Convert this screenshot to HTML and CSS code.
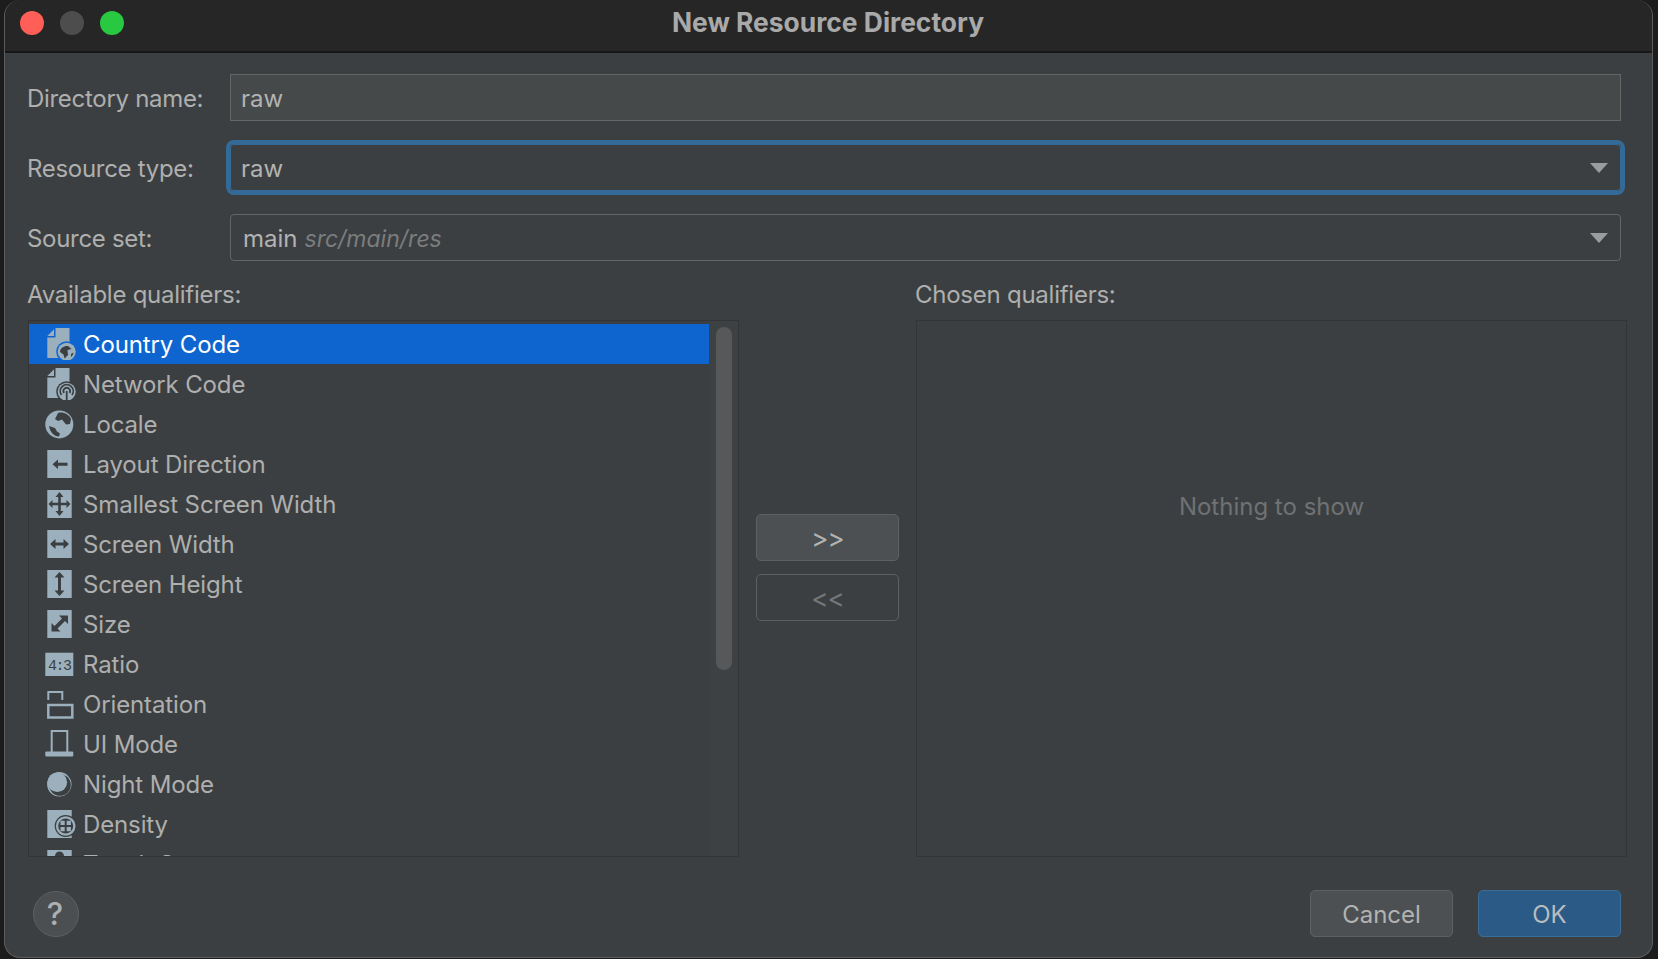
FILE: index.html
```html
<!DOCTYPE html>
<html lang="en">
<head>
<meta charset="utf-8">
<title>New Resource Directory</title>
<link rel="stylesheet" href="styles.css">
</head>
<body>
<div class="window">
  <header class="titlebar">
    <div class="lights"><span class="light red"></span><span class="light gray"></span><span class="light green"></span></div>
    <div class="title">New Resource Directory</div>
  </header>
  <main class="content">
    <div class="form">
      <label class="label">Directory name:</label>
      <div class="field input">raw</div>
      <label class="label">Resource type:</label>
      <div class="field combo focused">raw<span class="caret"></span></div>
      <label class="label">Source set:</label>
      <div class="field combo rounded source">main <em class="path">src/main/res</em><span class="caret"></span></div>
    </div>
    <div class="qualifiers">
      <div class="column">
        <div class="col-label">Available qualifiers:</div>
        <div class="panel list-panel">
          <ul class="rows">
            <li class="row selected"><svg class="icon" viewBox="0 0 32 32"><path class="l" d="M2.3 8 9 1.2V8zM10.5 0h14v30H2.3V9.5h8.2z"/><circle class="bg sel-bg" cx="21.7" cy="23.7" r="10.5"/><circle class="l" cx="21.7" cy="23.7" r="9"/><path class="d" d="M15 24c0-4 4-6.500 8-6l3.500 3-4 1 .5 5-3.500 3.500-1-4zM26 26l2.500-1.500c0 1.500-1 3.500-2.500 4.500z"/></svg>Country Code</li>
            <li class="row"><svg class="icon" viewBox="0 0 32 32"><path class="l" d="M2.3 8 9 1.2V8zM10.500 0h14v30H2.300V9.500h8.200z"/><circle class="bg" cx="21.700" cy="23.700" r="10.500"/><circle class="l" cx="21.700" cy="23.700" r="9"/><path class="ds" d="M16.500 27a6.500 6.500 0 1 1 10.500 0M19 25a3.300 3.300 0 1 1 5.500 0"/><path class="ds" d="M21.700 23v9"/></svg>Network Code</li>
            <li class="row"><svg class="icon" viewBox="0 0 32 32"><circle class="l" cx="14.300" cy="16.400" r="14"/><path class="d" d="M13 5c5-1.500 11 1.500 13 6l-1 5-4 .5-4-5-4 1.500-3-2zM4 18l6 2 2 3.500 3 2-1 3C9 28.500 5 24 4 18z"/></svg>Locale</li>
            <li class="row"><svg class="icon" viewBox="0 0 32 32"><rect class="l" x="2.300" y="2" width="24.400" height="28"/><path class="d" d="M7.500 16.300 13 11.500v3.300h9.500v3H13v3.300z"/></svg>Layout Direction</li>
            <li class="row"><svg class="icon" viewBox="0 0 32 32"><rect class="l" x="2.300" y="2" width="24.400" height="28"/><path class="d" d="M14.500 4l4 5h-2.700v5.700h5.700V12l4 4-4 4v-2.700h-5.700V23h2.700l-4 5-4-5h2.700v-5.700H7.500V20l-4-4 4-4v2.700h5.700V9h-2.700z"/></svg>Smallest Screen Width</li>
            <li class="row"><svg class="icon" viewBox="0 0 32 32"><rect class="l" x="2.300" y="2" width="24.400" height="28"/><path class="d" d="M5 16l5.500-5v3.500h8V11l5.500 5-5.500 5v-3.500h-8V21z"/></svg>Screen Width</li>
            <li class="row"><svg class="icon" viewBox="0 0 32 32"><rect class="l" x="2.300" y="2" width="24.400" height="28"/><path class="d" d="M14.500 4l5 5.500h-3.500v13h3.500l-5 5.500-5-5.500H13v-13H9.500z"/></svg>Screen Height</li>
            <li class="row"><svg class="icon" viewBox="0 0 32 32"><rect class="l" x="2.300" y="2" width="24.400" height="28"/><path class="d" d="M23 7.500V16l-3-3-7.500 7.500 3 3H6.500V15l3 3L17 10.500l-3-3z"/></svg>Size</li>
            <li class="row"><svg class="icon" viewBox="0 0 32 32"><rect class="l" x="0.300" y="4.700" width="28" height="23.300"/><text class="ratio" x="14.300" y="21.500">4:3</text></svg>Ratio</li>
            <li class="row"><svg class="icon" viewBox="0 0 32 32"><path class="ls" d="M3.300 12V4h14v8"/><rect class="ls wide" x="3.300" y="17" width="24" height="12.500"/></svg>Orientation</li>
            <li class="row"><svg class="icon" viewBox="0 0 32 32"><path class="ls" d="M6.700 24V3h15.600v21"/><rect class="l" x="0.300" y="23.500" width="28" height="5" rx="1"/></svg>UI Mode</li>
            <li class="row"><svg class="icon" viewBox="0 0 32 32"><circle class="l" cx="14.300" cy="16.300" r="12.200"/><circle class="bg" cx="15" cy="17" r="10.800"/><circle class="l" cx="12.300" cy="14.300" r="9.800"/></svg>Night Mode</li>
            <li class="row"><svg class="icon" viewBox="0 0 32 32"><rect class="l" x="2.300" y="2" width="24.400" height="28"/><circle class="bg" cx="20.700" cy="18" r="11"/><circle class="l" cx="20.700" cy="18" r="9.800"/><circle class="bg" cx="20.700" cy="18" r="7.500"/><path class="l" d="M15.500 12.800h4.200V17h-4.200zM21.700 12.800h4.200V17h-4.200zM15.500 19h4.200v4.200h-4.200zM21.700 19h4.200v4.200h-4.200z"/></svg>Density</li>
            <li class="row"><svg class="icon" viewBox="0 0 32 32"><rect class="l" x="2.300" y="2" width="24.400" height="28"/><circle class="bg" cx="14.500" cy="8" r="4.500"/></svg>Touch Screen</li>
          </ul>
          <div class="track"><div class="thumb"></div></div>
        </div>
      </div>
      <div class="mover">
        <button class="btn move on">&gt;&gt;</button>
        <button class="btn move off">&lt;&lt;</button>
      </div>
      <div class="column">
        <div class="col-label">Chosen qualifiers:</div>
        <div class="panel empty">Nothing to show</div>
      </div>
    </div>
    <footer class="footer">
      <button class="help">?</button>
      <div class="actions">
        <button class="btn on">Cancel</button>
        <button class="btn primary">OK</button>
      </div>
    </footer>
  </main>
</div>
</body>
</html>
```

FILE: styles.css
```css
* { box-sizing: border-box; }
html, body { margin: 0; height: 100%; }
body {
  background: #1c1c1c;
  font-family: Inter, "Liberation Sans", sans-serif;
  font-size: 24px;
  color: #aeafae;
  overflow: hidden;
}
.window {
  width: 1649px;
  height: 958px;
  margin-left: 4px;
  background: #3c3f41;
  border: 1px solid #5a5c5e;
  border-top: 0;
  border-radius: 16px;
  overflow: hidden;
  display: flex;
  flex-direction: column;
}
.titlebar {
  height: 53px;
  flex: none;
  background: #262626;
  border-bottom: 2px solid #171717;
  display: flex;
  align-items: center;
  justify-content: center;
  position: relative;
}
.lights {
  position: absolute;
  left: 15px;
  top: 11px;
  display: flex;
  gap: 16px;
}
.light { width: 24px; height: 24px; border-radius: 50%; }
.red { background: #ff5f57; }
.gray { background: #4d4d4d; }
.green { background: #28c840; }
.title {
  font-size: 26.400px;
  font-weight: 700;
  color: #a9a9a9;
  margin: -7px 1px 0 0;
}
.content {
  flex: 1;
  padding: 21px 31px 0 23px;
  display: flex;
  flex-direction: column;
  min-height: 0;
}
.form {
  display: grid;
  grid-template-columns: 202px 1fr;
  grid-auto-rows: 47px;
  row-gap: 23px;
  align-items: center;
}
.label {
  white-space: nowrap;
  margin-left: -1px;
  padding-top: 2px;
  letter-spacing: -0.300px;
}
.field {
  height: 47px;
  padding: 2px 0 0 10px;
  display: flex;
  align-items: center;
  gap: 7px;
  border: 1px solid #646666;
  position: relative;
  color: #b2b3b2;
}
.input { background: #45494a; }
.combo { border-radius: 4px; }
.source { padding-left: 12px; }
.focused {
  border-color: #346a98;
  box-shadow: 0 0 0 4px #346a98;
}
.path { color: #7b7d7e; font-style: italic; font-size: 23px; }
.caret {
  position: absolute;
  right: 12px;
  top: 18px;
  width: 18px;
  height: 10px;
  background: #9b9c9e;
  clip-path: polygon(0 0, 100% 0, 50% 100%);
}
.qualifiers {
  display: grid;
  grid-template-columns: 711px 177px 711px;
  grid-template-rows: 596px;
  flex: none;
}
.column { display: flex; flex-direction: column; min-width: 0; min-height: 0; }
.col-label {
  height: 59px;
  padding-top: 19px;
  margin-left: -1px;
  line-height: 30px;
  flex: none;
  letter-spacing: -0.250px;
}
.panel {
  flex: 1;
  min-height: 0;
  border: 1px solid #323436;
  overflow: hidden;
}
.list-panel { display: flex; }
.rows {
  list-style: none;
  margin: 0;
  padding: 3px 0 0;
  width: 680px;
  flex: none;
  letter-spacing: -0.130px;
}
.row {
  height: 40px;
  padding-left: 16px;
  display: flex;
  align-items: center;
  gap: 6px;
  white-space: nowrap;
}
.selected { background: #0f65d0; color: #fff; }
.icon { width: 32px; height: 32px; flex: none; }
.l { fill: #9bb0bc; }
.d { fill: #3c3f41; }
.bg { fill: #3c3f41; }
.sel-bg { fill: #0f65d0; }
.ds { fill: none; stroke: #3c3f41; stroke-width: 1.800; }
.ls { fill: none; stroke: #9bb0bc; stroke-width: 2; }
.wide { stroke-width: 2.500; }
.ratio {
  fill: #3c3f41;
  font-family: "Liberation Mono", monospace;
  font-size: 15px;
  letter-spacing: -1.500px;
  text-anchor: middle;
}
.track {
  flex: 1;
  padding: 6px 6px 0 7px;
  background: #3e4143;
}
.thumb {
  height: 343px;
  width: 16px;
  border-radius: 8px;
  background: #565859;
}
.mover {
  padding: 253px 17px 0;
  display: flex;
  flex-direction: column;
  gap: 13px;
}
.btn {
  width: 143px;
  height: 47px;
  border: 1px solid #5e6162;
  border-radius: 5px;
  background: #4c5052;
  color: #b2b3b2;
  font: inherit;
  padding: 2px 0 0;
  flex: none;
}
.move { font-size: 26px; letter-spacing: -1px; }
.off { background: transparent; color: #74777a; }
.primary { background: #2a5a85; border-color: #3a6d97; color: #b9bdc0; }
.empty {
  padding-top: 171px;
  text-align: center;
  line-height: 30px;
  color: #6f7273;
}
.footer {
  margin-top: 33px;
  display: flex;
  justify-content: space-between;
  align-items: center;
  padding-left: 5px;
}
.help {
  width: 46px;
  height: 46px;
  border-radius: 50%;
  border: 1px solid #5e6162;
  background: #4b4f51;
  color: #adb0b1;
  font: inherit;
  font-size: 31px;
  font-weight: 500;
  padding: 0 2px 0 0;
}
.actions { display: flex; gap: 25px; }
```
